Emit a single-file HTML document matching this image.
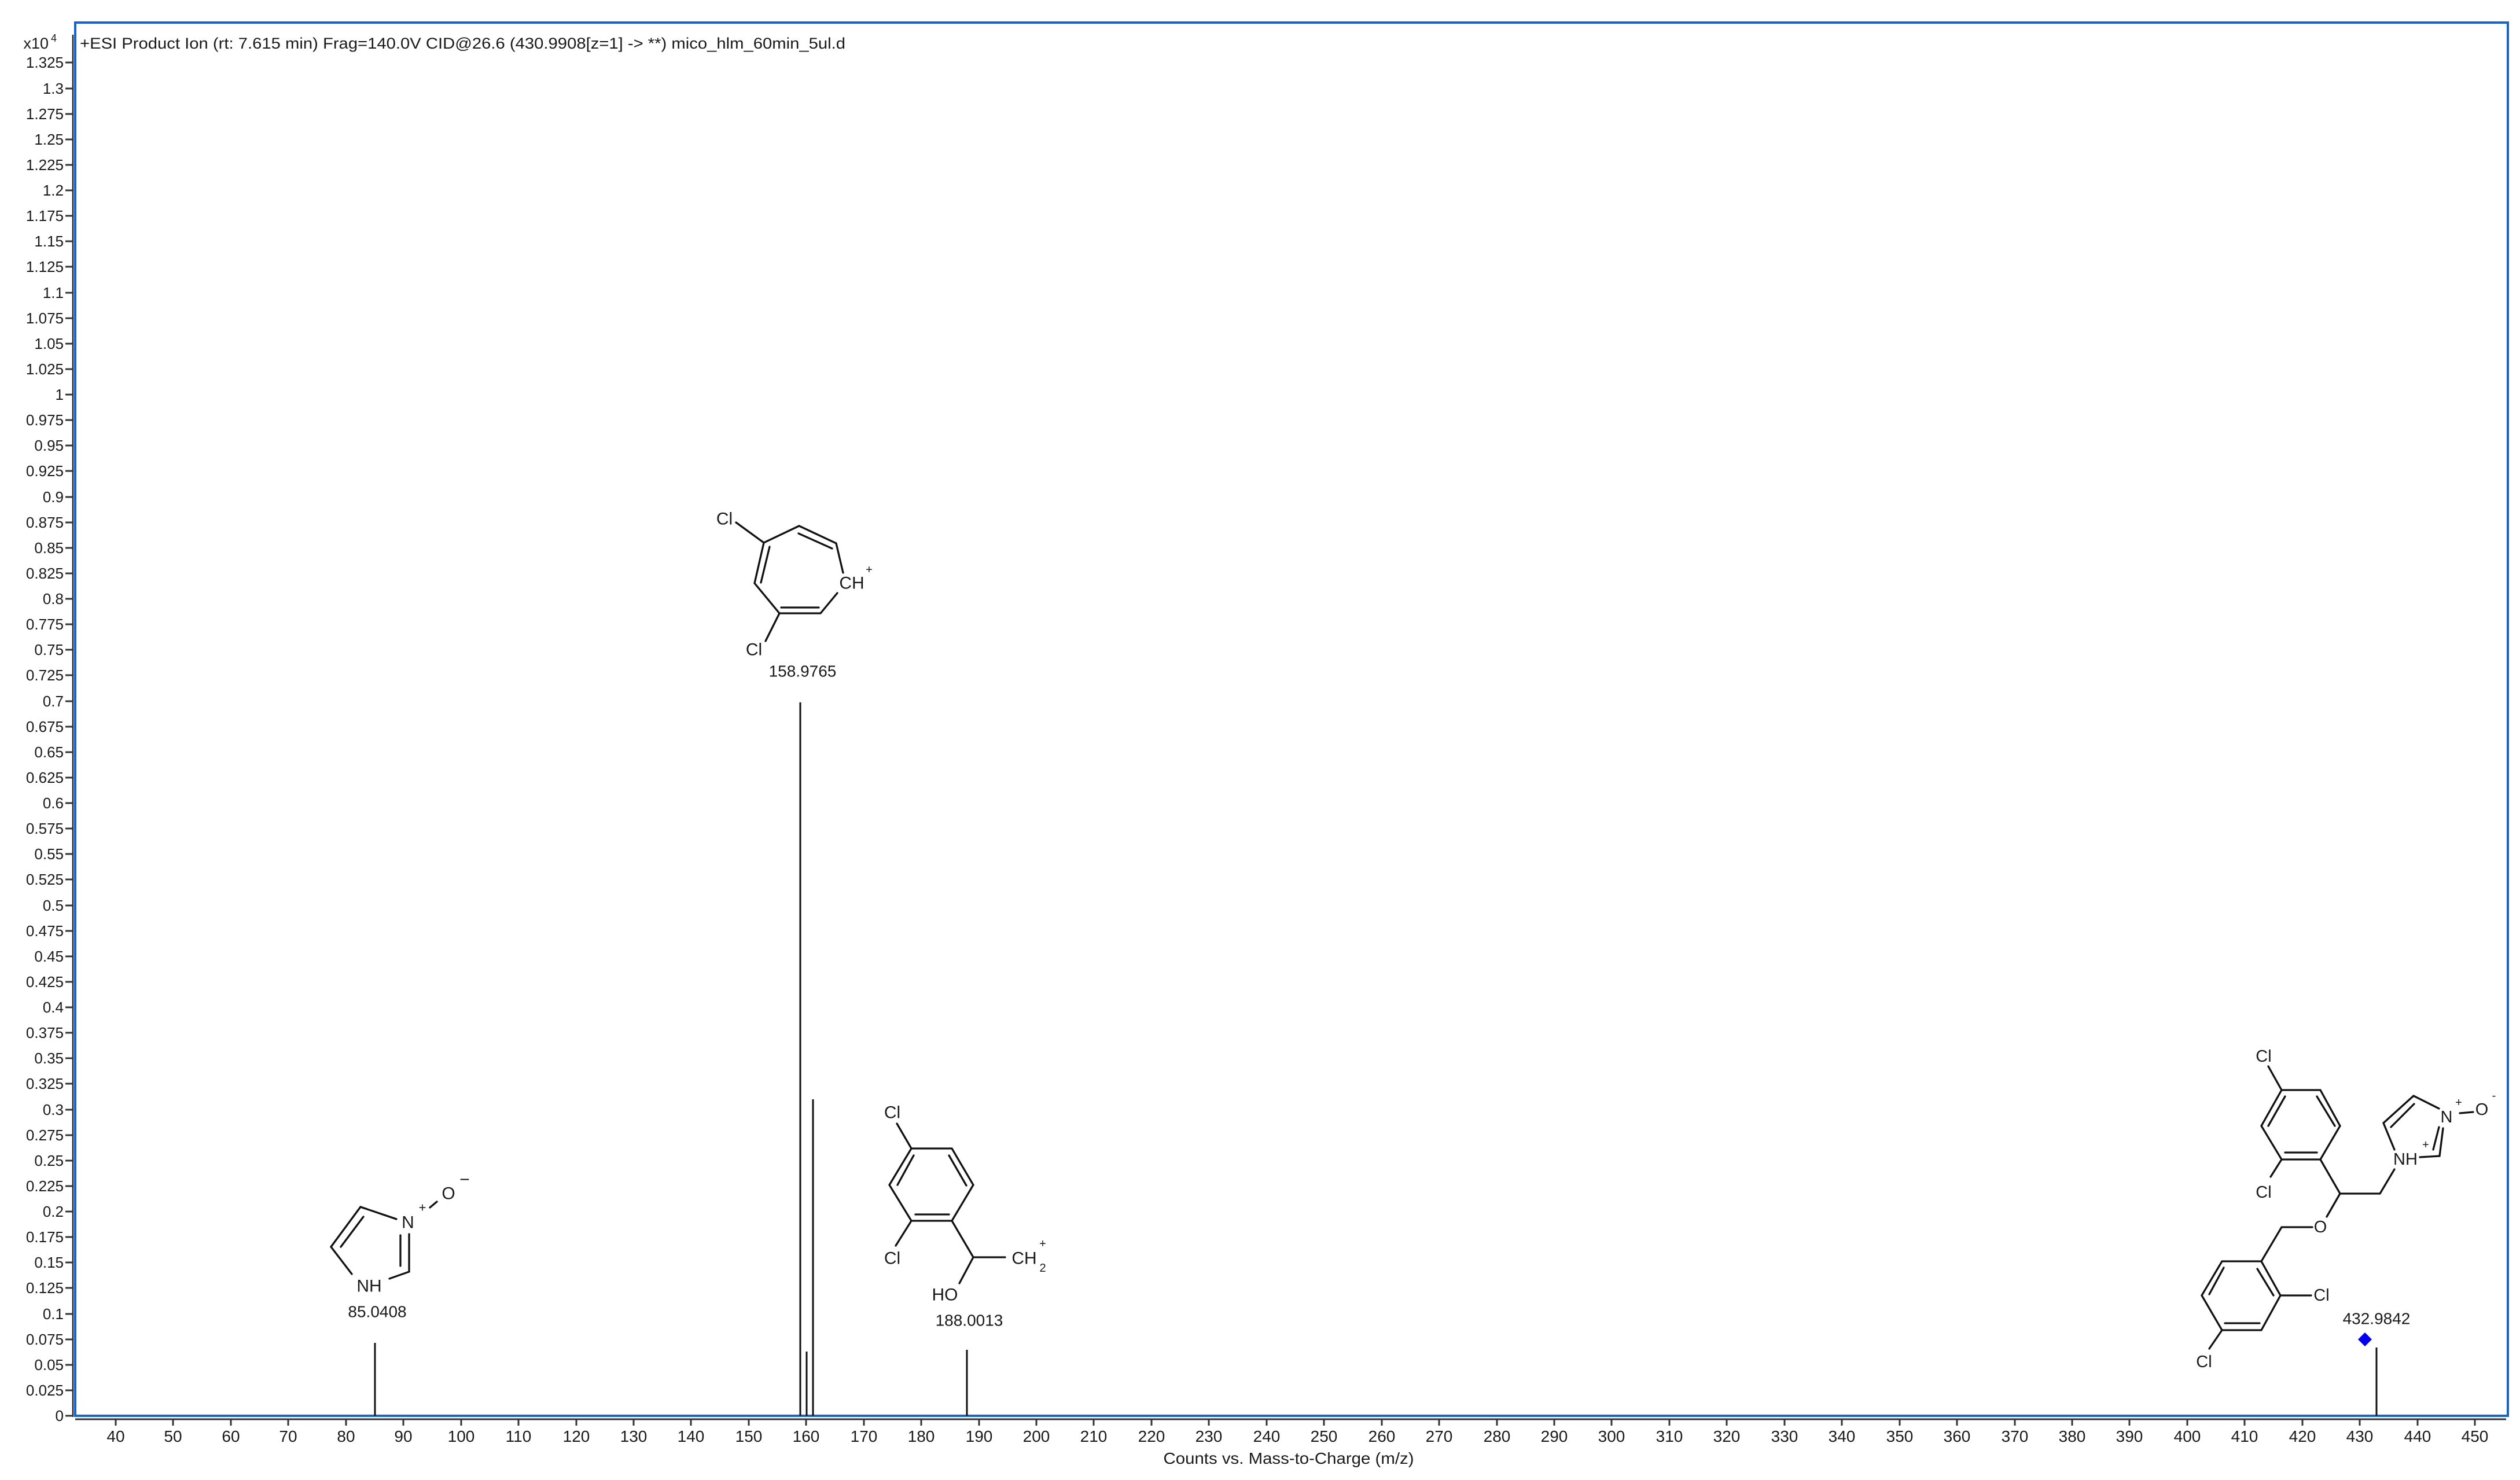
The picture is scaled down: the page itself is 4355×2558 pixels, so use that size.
<!DOCTYPE html>
<html><head><meta charset="utf-8"><style>
html,body{margin:0;padding:0;background:#fff;}
svg{display:block;}
text{font-family:"Liberation Sans",Arial,sans-serif;fill:#1a1a1a;}
</style></head><body>
<svg width="4355" height="2558" viewBox="0 0 4355 2558" xmlns="http://www.w3.org/2000/svg">
<rect width="4355" height="2558" fill="#fff"/>
<rect x="130" y="39" width="4204" height="2408" fill="none" stroke="#1565c8" stroke-width="4"/>
<line x1="126" y1="60" x2="126" y2="2449" stroke="#222" stroke-width="2.5"/>
<line x1="130" y1="2453" x2="4331" y2="2453" stroke="#333" stroke-width="3"/>
<text x="84" y="84" font-size="27" text-anchor="end">x10</text>
<text x="88" y="72" font-size="18">4</text>
<text x="138" y="84" font-size="27" textLength="1323" lengthAdjust="spacingAndGlyphs">+ESI Product Ion (rt: 7.615 min) Frag=140.0V CID@26.6 (430.9908[z=1] -&gt; **) mico_hlm_60min_5ul.d</text>
<text x="2227" y="2530" font-size="28" text-anchor="middle" textLength="433" lengthAdjust="spacingAndGlyphs">Counts vs. Mass-to-Charge (m/z)</text>
<g stroke="#111" stroke-width="3">
<line x1="648" y1="2321" x2="648" y2="2447"/>
<line x1="1383" y1="1214" x2="1383" y2="2447"/>
<line x1="1394" y1="2336" x2="1394" y2="2447"/>
<line x1="1405" y1="1900" x2="1405" y2="2447"/>
<line x1="1671" y1="2333" x2="1671" y2="2447"/>
<line x1="4107" y1="2329" x2="4107" y2="2447"/>
</g>
<polygon points="4087,2303 4099,2315 4087,2327 4075,2315" fill="#0000ee"/>
<g stroke="#111" stroke-width="3.3" fill="none" stroke-linecap="round">
<path d="M1272,903 L1320,938 L1381,909 L1445,939 L1457,990 M1447,1025 L1418,1060 L1347,1060 L1304,1008 L1320,938 M1330,945 L1315,1007 M1380,922 L1438,948 M1350,1050 L1415,1050 M1347,1060 L1323,1108"/>
<path d="M685,2107 L623,2086 L572,2155 L608,2202 M673,2210 L707,2198 L707,2133 M692,2188 L692,2135 M628,2103 L589,2155 M743,2087 L755,2077"/>
<path d="M1550,1942 L1575,1985 L1645,1985 L1682,2048 L1645,2110 L1575,2110 L1537,2048 L1575,1985 M1579,1997 L1551,2048 M1640,1997 L1670,2049 M1582,2099 L1640,2099 M1575,2110 L1548,2153 M1645,2110 L1682,2173 L1737,2173 M1682,2173 L1658,2218"/>
<path d="M3920,1843 L3943,1884 L4010,1884 L4044,1946 L4010,2004 L3943,2004 L3908,1946 L3943,1884 M3949,1895 L3920,1946 M4004,1895 L4035,1946 M3949,1992 L4004,1992 M3943,2004 L3924,2034 M4010,2004 L4044,2063 L4113,2063 L4138,2021 M4138,1987 L4119,1941 L4171,1894 L4215,1916 M4182,2000 L4216,1998 L4222,1950 M4215,1948 L4205,1987 M4132,1948 L4172,1908 M4251,1924 L4274,1922 M4044,2063 L4021,2103 M3996,2121 L3943,2121 L3908,2180 L3941,2239 L3908,2299 L3840,2299 L3805,2239 L3840,2180 L3908,2180 M3901,2193 L3929,2239 M3845,2287 L3905,2287 M3843,2191 L3818,2237 M3941,2239 L3994,2239 M3840,2299 L3818,2331"/>
</g>
<g font-size="30" text-anchor="middle" dominant-baseline="central">
<text x="1252" y="897">Cl</text>
<text x="1303" y="1123">Cl</text>
<text x="1472" y="1008">CH</text>
<text x="1502" y="985" font-size="20">+</text>
<text x="705" y="2113">N</text>
<text x="638" y="2223">NH</text>
<text x="730" y="2087" font-size="22">+</text>
<text x="775" y="2063">O</text>
<text x="803" y="2039">−</text>
<text x="1542" y="1923">Cl</text>
<text x="1542" y="2175">Cl</text>
<text x="1770" y="2175">CH</text>
<text x="1802" y="2192" font-size="20">2</text>
<text x="1802" y="2150" font-size="20">+</text>
<text x="1633" y="2238">HO</text>
<text x="3912" y="1826" font-size="29">Cl</text>
<text x="3912" y="2061" font-size="29">Cl</text>
<text x="4157" y="2004" font-size="29">NH</text>
<text x="4192" y="1979" font-size="20">+</text>
<text x="4228" y="1931" font-size="29">N</text>
<text x="4249" y="1906" font-size="20">+</text>
<text x="4289" y="1918" font-size="29">O</text>
<text x="4310" y="1894" font-size="20">-</text>
<text x="4010" y="2121" font-size="29">O</text>
<text x="4012" y="2239" font-size="29">Cl</text>
<text x="3809" y="2354" font-size="29">Cl</text>
</g>
<g font-size="28" text-anchor="middle" dominant-baseline="central">
<text x="1387" y="1160">158.9765</text>
<text x="652" y="2267">85.0408</text>
<text x="1675" y="2282">188.0013</text>
<text x="4107" y="2279">432.9842</text>
</g>
<g stroke="#333" stroke-width="3">
<path d="M113,2447H126 M113,2403H126 M113,2359H126 M113,2315H126 M113,2271H126 M113,2226H126 M113,2182H126 M113,2138H126 M113,2094H126 M113,2050H126 M113,2006H126 M113,1962H126 M113,1918H126 M113,1873H126 M113,1829H126 M113,1785H126 M113,1741H126 M113,1697H126 M113,1653H126 M113,1609H126 M113,1565H126 M113,1520H126 M113,1476H126 M113,1432H126 M113,1388H126 M113,1344H126 M113,1300H126 M113,1256H126 M113,1212H126 M113,1167H126 M113,1123H126 M113,1079H126 M113,1035H126 M113,991H126 M113,947H126 M113,903H126 M113,859H126 M113,814H126 M113,770H126 M113,726H126 M113,682H126 M113,638H126 M113,594H126 M113,550H126 M113,506H126 M113,461H126 M113,417H126 M113,373H126 M113,329H126 M113,285H126 M113,241H126 M113,197H126 M113,153H126 M113,108H126"/>
</g>
<g font-size="26" text-anchor="end" dominant-baseline="central">
<text x="110" y="2447">0</text><text x="110" y="2403">0.025</text><text x="110" y="2359">0.05</text><text x="110" y="2315">0.075</text><text x="110" y="2271">0.1</text><text x="110" y="2226">0.125</text><text x="110" y="2182">0.15</text><text x="110" y="2138">0.175</text><text x="110" y="2094">0.2</text><text x="110" y="2050">0.225</text><text x="110" y="2006">0.25</text><text x="110" y="1962">0.275</text><text x="110" y="1918">0.3</text><text x="110" y="1873">0.325</text><text x="110" y="1829">0.35</text><text x="110" y="1785">0.375</text><text x="110" y="1741">0.4</text><text x="110" y="1697">0.425</text><text x="110" y="1653">0.45</text><text x="110" y="1609">0.475</text><text x="110" y="1565">0.5</text><text x="110" y="1520">0.525</text><text x="110" y="1476">0.55</text><text x="110" y="1432">0.575</text><text x="110" y="1388">0.6</text><text x="110" y="1344">0.625</text><text x="110" y="1300">0.65</text><text x="110" y="1256">0.675</text><text x="110" y="1212">0.7</text><text x="110" y="1167">0.725</text><text x="110" y="1123">0.75</text><text x="110" y="1079">0.775</text><text x="110" y="1035">0.8</text><text x="110" y="991">0.825</text><text x="110" y="947">0.85</text><text x="110" y="903">0.875</text><text x="110" y="859">0.9</text><text x="110" y="814">0.925</text><text x="110" y="770">0.95</text><text x="110" y="726">0.975</text><text x="110" y="682">1</text><text x="110" y="638">1.025</text><text x="110" y="594">1.05</text><text x="110" y="550">1.075</text><text x="110" y="506">1.1</text><text x="110" y="461">1.125</text><text x="110" y="417">1.15</text><text x="110" y="373">1.175</text><text x="110" y="329">1.2</text><text x="110" y="285">1.225</text><text x="110" y="241">1.25</text><text x="110" y="197">1.275</text><text x="110" y="153">1.3</text><text x="110" y="108">1.325</text>
</g>
<g stroke="#333" stroke-width="3">
<path d="M200,2453V2464 M299,2453V2464 M399,2453V2464 M498,2453V2464 M598,2453V2464 M697,2453V2464 M797,2453V2464 M896,2453V2464 M996,2453V2464 M1095,2453V2464 M1194,2453V2464 M1294,2453V2464 M1393,2453V2464 M1493,2453V2464 M1592,2453V2464 M1692,2453V2464 M1791,2453V2464 M1890,2453V2464 M1990,2453V2464 M2089,2453V2464 M2189,2453V2464 M2288,2453V2464 M2388,2453V2464 M2487,2453V2464 M2587,2453V2464 M2686,2453V2464 M2785,2453V2464 M2885,2453V2464 M2984,2453V2464 M3084,2453V2464 M3183,2453V2464 M3283,2453V2464 M3382,2453V2464 M3482,2453V2464 M3581,2453V2464 M3680,2453V2464 M3780,2453V2464 M3879,2453V2464 M3979,2453V2464 M4078,2453V2464 M4178,2453V2464 M4277,2453V2464"/>
</g>
<g font-size="28" text-anchor="middle">
<text x="200" y="2492">40</text><text x="299" y="2492">50</text><text x="399" y="2492">60</text><text x="498" y="2492">70</text><text x="598" y="2492">80</text><text x="697" y="2492">90</text><text x="797" y="2492">100</text><text x="896" y="2492">110</text><text x="996" y="2492">120</text><text x="1095" y="2492">130</text><text x="1194" y="2492">140</text><text x="1294" y="2492">150</text><text x="1393" y="2492">160</text><text x="1493" y="2492">170</text><text x="1592" y="2492">180</text><text x="1692" y="2492">190</text><text x="1791" y="2492">200</text><text x="1890" y="2492">210</text><text x="1990" y="2492">220</text><text x="2089" y="2492">230</text><text x="2189" y="2492">240</text><text x="2288" y="2492">250</text><text x="2388" y="2492">260</text><text x="2487" y="2492">270</text><text x="2587" y="2492">280</text><text x="2686" y="2492">290</text><text x="2785" y="2492">300</text><text x="2885" y="2492">310</text><text x="2984" y="2492">320</text><text x="3084" y="2492">330</text><text x="3183" y="2492">340</text><text x="3283" y="2492">350</text><text x="3382" y="2492">360</text><text x="3482" y="2492">370</text><text x="3581" y="2492">380</text><text x="3680" y="2492">390</text><text x="3780" y="2492">400</text><text x="3879" y="2492">410</text><text x="3979" y="2492">420</text><text x="4078" y="2492">430</text><text x="4178" y="2492">440</text><text x="4277" y="2492">450</text>
</g>
</svg>
</body></html>
